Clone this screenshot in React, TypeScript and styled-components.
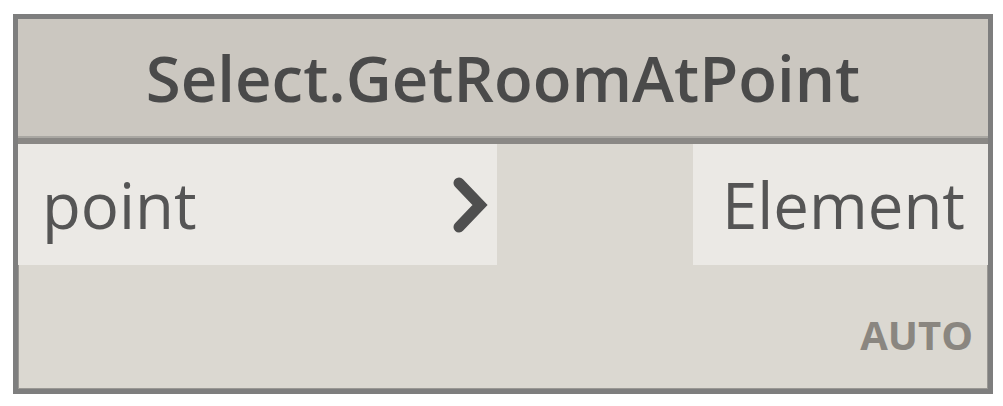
import React from "react";
import styled, { createGlobalStyle } from "styled-components";

const Global = createGlobalStyle`
  html, body { margin: 0; padding: 0; background: #ffffff; }
  body { font-family: "Open Sans", "Noto Sans", sans-serif; }
`;

const Page = styled.div`
  padding: 14px 0 0 13px;
`;

const Node = styled.div`
  width: 980px;
  height: 380px;
  box-sizing: border-box;
  border: 5px solid #7e7e7e;
  box-shadow: inset 0 0 0 1px #9a9894;
  background: #dbd8d1;
  display: flex;
  flex-direction: column;
`;

const Header = styled.div`
  height: 125px;
  flex-shrink: 0;
  background: #cbc7c0;
  border-bottom: 6px solid #8a8885;
  box-shadow: inset 0 -2px 0 #a9a7a2;
  display: flex;
  align-items: center;
  justify-content: center;
  font-size: 63.5px;
  font-weight: 600;
  color: #4a4a4a;
  padding-bottom: 3px;
  box-sizing: border-box;
`;

const Ports = styled.div`
  height: 121px;
  flex-shrink: 0;
  display: flex;
  justify-content: space-between;
`;

const Port = styled.div<{ $w: number }>`
  width: ${(p) => p.$w}px;
  background: #ebe9e5;
  display: flex;
  align-items: center;
  box-sizing: border-box;
  font-size: 63.5px;
  font-weight: 400;
  color: #555555;
`;

const InPort = styled(Port)`
  justify-content: space-between;
  padding: 0 6px 0 24px;
`;

const OutPort = styled(Port)`
  justify-content: flex-end;
  padding: 0 23px 0 6px;
`;

const Footer = styled.div`
  flex: 1;
  display: flex;
  align-items: flex-end;
  justify-content: flex-end;
  padding: 0 15px 34px 0;
`;

const Auto = styled.span`
  font-family: "Open Sans", sans-serif;
  font-weight: 700;
  font-size: 40px;
  color: #8a8680;
  line-height: 1;
`;

const Chevron = () => (
  <svg width="40" height="58" viewBox="0 0 40 58">
    <path d="M8 7 L29 29 L8 51" fill="none" stroke="#4f4f4f" strokeWidth="11" strokeLinecap="round" strokeLinejoin="miter" />
  </svg>
);

export default function App() {
  return (
    <>
      <Global />
      <Page>
        <Node>
          <Header>Select.GetRoomAtPoint</Header>
          <Ports>
            <InPort $w={479}>
              <span>point</span>
              <Chevron />
            </InPort>
            <OutPort $w={295}>
              <span>Element</span>
            </OutPort>
          </Ports>
          <Footer>
            <Auto>AUTO</Auto>
          </Footer>
        </Node>
      </Page>
    </>
  );
}
